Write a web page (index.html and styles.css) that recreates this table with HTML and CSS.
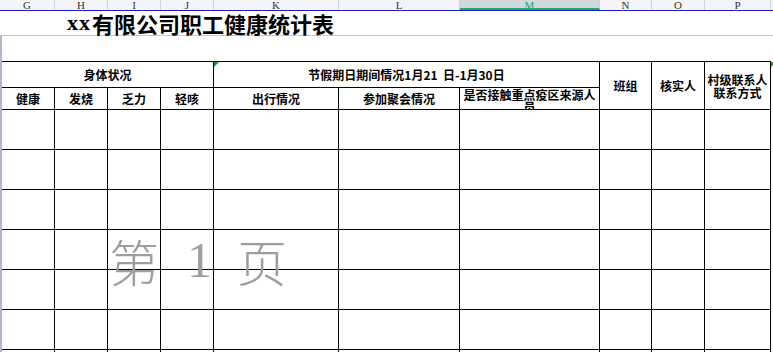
FILE: index.html
```html
<!DOCTYPE html>
<html lang="zh-CN">
<head>
<meta charset="utf-8">
<title>xx有限公司职工健康统计表</title>
<link rel="stylesheet" href="styles.css">
</head>
<body>
<div class="colbar">
  <div class="h w55">G</div>
  <div class="h w53">H</div>
  <div class="h w53">I</div>
  <div class="h w53">J</div>
  <div class="h w125">K</div>
  <div class="h w121">L</div>
  <div class="h w140 sel">M</div>
  <div class="h w52">N</div>
  <div class="h w53">O</div>
  <div class="h w66">P</div>
  <div class="h rest"></div>
</div>
<div class="title"><span class="latin">xx</span>有限公司职工健康统计表</div>
<div class="sheet">
  <div class="gap"></div>
  <div class="grid-wrap">
    <div class="grid">
      <div class="th span4">身体状况</div>
      <div class="th span3 marked"><span class="mark"></span>节假期日期间情况1月21&nbsp; 日-1月30日</div>
      <div class="th rspan">班组</div>
      <div class="th rspan">核实人</div>
      <div class="th rspan two">村级联系人联系方式</div>
      <div class="th">健康</div>
      <div class="th">发烧</div>
      <div class="th">乏力</div>
      <div class="th">轻咳</div>
      <div class="th">出行情况</div>
      <div class="th">参加聚会情况</div>
      <div class="th wrap">是否接触重点疫区来源人员</div>

      <div></div><div></div><div></div><div></div><div></div><div></div><div></div><div></div><div></div><div></div>
      <div></div><div></div><div></div><div></div><div></div><div></div><div></div><div></div><div></div><div></div>
      <div></div><div></div><div></div><div></div><div></div><div></div><div></div><div></div><div></div><div></div>
      <div></div><div></div><div></div><div></div><div></div><div></div><div></div><div></div><div></div><div></div>
      <div></div><div></div><div></div><div></div><div></div><div></div><div></div><div></div><div></div><div></div>
      <div></div><div></div><div></div><div></div><div></div><div></div><div></div><div></div><div></div><div></div>
      <div></div><div></div><div></div><div></div><div></div><div></div><div></div><div></div><div></div><div></div>
    </div>
    <span class="mark mark-q"></span>
  </div>
</div>
<div class="wm"><span class="k">第</span><span class="n">1</span><span class="k">页</span></div>
</body>
</html>
```

FILE: styles.css
```css
body {
  margin: 0;
  position: relative;
  width: 773px;
  height: 352px;
  overflow: hidden;
  background: #ffffff;
  font-family: "Noto Sans CJK SC", sans-serif;
  color: #000;
}

.colbar {
  display: flex;
  height: 10px;
  border-bottom: 1px solid #1c1cc8;
  background: #f4f5f7;
}

.h {
  flex: none;
  box-sizing: border-box;
  height: 10px;
  border-right: 1px solid #cfd2d9;
  text-align: center;
  font-family: "Liberation Serif", serif;
  font-size: 11px;
  line-height: 10px;
  color: #333;
}

.w55 { width: 55px; }
.w53 { width: 53px; }
.w52 { width: 52px; }
.w66 { width: 66px; }
.w121 { width: 121px; }
.w125 { width: 125px; }
.w140 { width: 140px; }
.rest { flex: 1; border-right: none; }

.h.sel {
  background: #d3d6dd;
  border-bottom: 2px solid #21a86b;
  color: #21a86b;
}

.title {
  height: 24px;
  border-bottom: 1px solid #c8c8d4;
  display: flex;
  align-items: center;
  padding-left: 67px;
  font-family: "Noto Sans CJK SC", sans-serif;
  font-weight: bold;
  font-size: 22px;
  line-height: 24px;
}

.title .latin {
  font-family: "Liberation Serif", serif;
  letter-spacing: 1px;
  margin-right: 1px;
}

.sheet {
  border-left: 2px solid #b3b7ca;
  height: 330px;
}

.gap { height: 25px; }

.grid-wrap { position: relative; }

.grid {
  display: grid;
  grid-template-columns: 53px 53px 53px 53px 125px 121px 140px 52px 53px 66px;
  grid-template-rows: 26px 22px repeat(7, 40px);
  width: 769px;
  border-top: 1px solid #000;
}

.grid > div {
  box-sizing: border-box;
  border-right: 1px solid #000;
  border-bottom: 1px solid #000;
}

.th {
  display: flex;
  align-items: center;
  justify-content: center;
  text-align: center;
  font-weight: bold;
  font-size: 12px;
  line-height: 13px;
  overflow: hidden;
}

.span4 { grid-column: span 4; }
.span3 { grid-column: span 3; }
.rspan { grid-row: span 2; }

.two { padding: 0 2px; }

.wrap {
  align-items: flex-start;
  padding-top: 1px;
  line-height: 12px;
}

.marked { position: relative; }

.mark {
  position: absolute;
  top: 0;
  left: 0;
  width: 0;
  height: 0;
  border-top: 5px solid #1f8f3a;
  border-right: 5px solid transparent;
}

.mark-q {
  top: 1px;
  left: 769px;
}

.wm {
  position: absolute;
  left: 109px;
  top: 235px;
  display: flex;
  color: #9e9e9e;
  font-size: 50px;
  line-height: 50px;
  font-weight: 300;
  pointer-events: none;
}

.wm .k { width: 50px; }

.wm .n {
  width: 25px;
  margin: 0 25px 0 28px;
  text-align: center;
  font-family: "Liberation Serif", serif;
  font-weight: normal;
}
```
